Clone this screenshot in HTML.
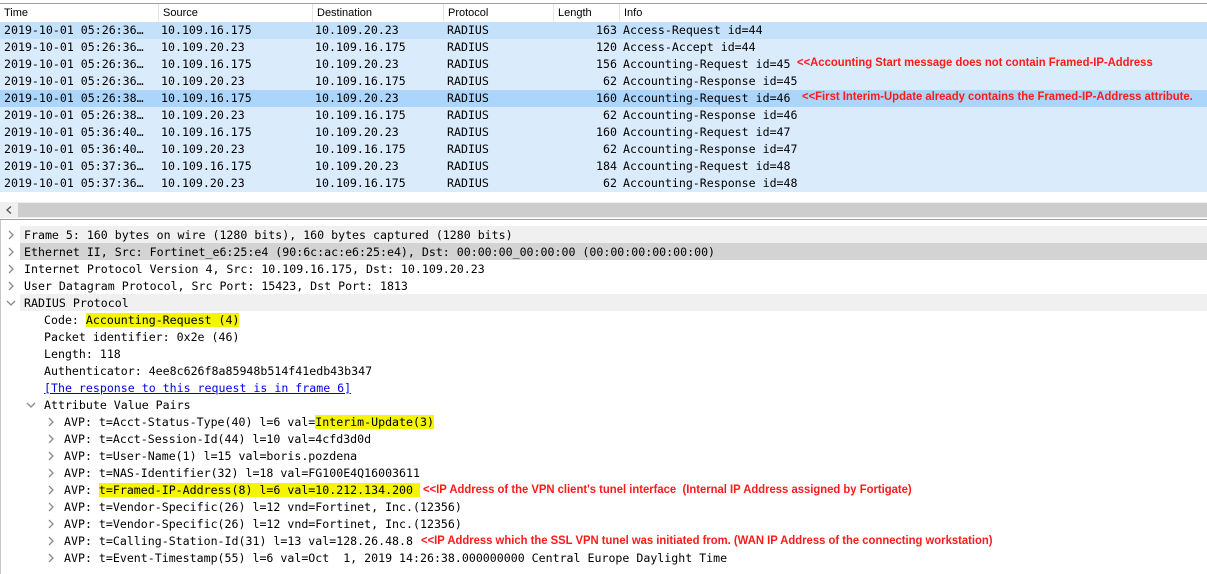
<!DOCTYPE html>
<html><head><meta charset="utf-8"><style>
body{margin:0;width:1207px;height:574px;overflow:hidden;background:#fff;position:relative;font-family:"DejaVu Sans Mono","Liberation Mono",monospace;font-size:11.6px;color:#000}
.a{position:absolute;white-space:pre;line-height:17px;height:17px}
.hdr{position:absolute;top:3px;left:0;width:1207px;height:19px;border-top:1px solid #a0a0a0;background:#fff;font-family:"Liberation Sans",sans-serif;font-size:11px}
.hdr span{position:absolute;top:0;line-height:19px;padding-left:4px;border-left:1px solid #e5e5e5;height:19px}
.row{position:absolute;left:0;width:1207px;height:17px;background:#daebfc}
.red{position:absolute;color:#ff1a1a;font-family:"Liberation Sans",sans-serif;font-size:11.5px;font-weight:bold;line-height:17px;white-space:pre;transform:scaleX(0.98);transform-origin:left}
.hl{background:#f5f500}
.c{position:absolute;width:10px;height:10px}
.d{margin-top:1px}
</style></head><body>
<div class="hdr">
<span style="left:0;border-left:none">Time</span>
<span style="left:158px">Source</span>
<span style="left:312px">Destination</span>
<span style="left:443px">Protocol</span>
<span style="left:553px">Length</span>
<span style="left:619px">Info</span>
</div>
<div class="row" style="top:22px;background:#c4e1fb"></div>
<div class="row" style="top:39px"></div>
<div class="row" style="top:56px"></div>
<div class="row" style="top:73px"></div>
<div class="row" style="top:90px;background:#acd5fb"></div>
<div class="row" style="top:107px"></div>
<div class="row" style="top:124px"></div>
<div class="row" style="top:141px"></div>
<div class="row" style="top:158px"></div>
<div class="row" style="top:175px"></div>
<div class="a" style="left:4px;top:22px">2019-10-01 05:26:36…
2019-10-01 05:26:36…
2019-10-01 05:26:36…
2019-10-01 05:26:36…
2019-10-01 05:26:38…
2019-10-01 05:26:38…
2019-10-01 05:36:40…
2019-10-01 05:36:40…
2019-10-01 05:37:36…
2019-10-01 05:37:36…</div>
<div class="a" style="left:161px;top:22px;height:auto">10.109.16.175
10.109.20.23
10.109.16.175
10.109.20.23
10.109.16.175
10.109.20.23
10.109.16.175
10.109.20.23
10.109.16.175
10.109.20.23</div>
<div class="a" style="left:315px;top:22px;height:auto">10.109.20.23
10.109.16.175
10.109.20.23
10.109.16.175
10.109.20.23
10.109.16.175
10.109.20.23
10.109.16.175
10.109.20.23
10.109.16.175</div>
<div class="a" style="left:447px;top:22px;height:auto">RADIUS
RADIUS
RADIUS
RADIUS
RADIUS
RADIUS
RADIUS
RADIUS
RADIUS
RADIUS</div>
<div class="a" style="top:22px;height:auto;text-align:right;width:20px;left:596px">163
120
156
 62
160
 62
160
 62
184
 62</div>
<div class="a" style="left:623px;top:22px;height:auto">Access-Request id=44
Access-Accept id=44
Accounting-Request id=45
Accounting-Response id=45
Accounting-Request id=46
Accounting-Response id=46
Accounting-Request id=47
Accounting-Response id=47
Accounting-Request id=48
Accounting-Response id=48</div>
<div class="red" style="left:797px;top:55px">&lt;&lt;Accounting Start message does not contain Framed-IP-Address</div>
<div class="red" style="left:802px;top:89px">&lt;&lt;First Interim-Update already contains the Framed-IP-Address attribute.</div>
<!-- scrollbar -->
<div style="position:absolute;left:0;top:202px;width:1207px;height:16px;background:#f0f0f0"></div>
<div style="position:absolute;left:18px;top:203px;width:1189px;height:14px;background:#cdcdcd"></div>
<svg class="c" style="left:4px;top:205px" viewBox="0 0 10 10"><polyline points="7,1.5 3,5 7,8.5" fill="none" stroke="#555" stroke-width="1.3"/></svg>
<div style="position:absolute;left:0;top:219px;width:1207px;height:1px;background:#a0a0a0"></div>
<div style="position:absolute;left:0;top:220px;width:1px;height:354px;background:#c8c8c8"></div>
<!-- details -->
<div style="position:absolute;left:20px;top:226px;width:1187px;height:17px;background:#f0f0f0"></div>
<div style="position:absolute;left:20px;top:243px;width:1187px;height:17px;background:#d3d3d3"></div>
<div style="position:absolute;left:20px;top:294px;width:1187px;height:17px;background:#f0f0f0"></div>
<svg width="0" height="0" style="position:absolute"><defs>
<symbol id="r" viewBox="0 0 10 10"><polyline points="3,1 7,5 3,9" fill="none" stroke="#8a8a8a" stroke-width="1.3"/></symbol>
<symbol id="dn" viewBox="0 0 10 10"><polyline points="1,3 5,7 9,3" fill="none" stroke="#8a8a8a" stroke-width="1.3"/></symbol>
</defs></svg>
<svg class="c" style="left:6px;top:230px"><use href="#r"/></svg>
<svg class="c" style="left:6px;top:247px"><use href="#r"/></svg>
<svg class="c" style="left:6px;top:264px"><use href="#r"/></svg>
<svg class="c" style="left:6px;top:281px"><use href="#r"/></svg>
<svg class="c" style="left:6px;top:298px"><use href="#dn"/></svg>
<svg class="c" style="left:26px;top:400px"><use href="#dn"/></svg>
<svg class="c" style="left:46px;top:417px"><use href="#r"/></svg>
<svg class="c" style="left:46px;top:434px"><use href="#r"/></svg>
<svg class="c" style="left:46px;top:451px"><use href="#r"/></svg>
<svg class="c" style="left:46px;top:468px"><use href="#r"/></svg>
<svg class="c" style="left:46px;top:485px"><use href="#r"/></svg>
<svg class="c" style="left:46px;top:502px"><use href="#r"/></svg>
<svg class="c" style="left:46px;top:519px"><use href="#r"/></svg>
<svg class="c" style="left:46px;top:536px"><use href="#r"/></svg>
<svg class="c" style="left:46px;top:553px"><use href="#r"/></svg>
<div class="a" style="left:24px;top:227px">Frame 5: 160 bytes on wire (1280 bits), 160 bytes captured (1280 bits)</div>
<div class="a" style="left:24px;top:244px">Ethernet II, Src: Fortinet_e6:25:e4 (90:6c:ac:e6:25:e4), Dst: 00:00:00_00:00:00 (00:00:00:00:00:00)</div>
<div class="a" style="left:24px;top:261px">Internet Protocol Version 4, Src: 10.109.16.175, Dst: 10.109.20.23</div>
<div class="a" style="left:24px;top:278px">User Datagram Protocol, Src Port: 15423, Dst Port: 1813</div>
<div class="a" style="left:24px;top:295px">RADIUS Protocol</div>
<div class="a" style="left:44px;top:312px">Code: <span class="hl">Accounting-Request (4)</span></div>
<div class="a" style="left:44px;top:329px">Packet identifier: 0x2e (46)</div>
<div class="a" style="left:44px;top:346px">Length: 118</div>
<div class="a" style="left:44px;top:363px">Authenticator: 4ee8c626f8a85948b514f41edb43b347</div>
<div class="a" style="left:44px;top:380px;color:#0000ee;text-decoration:underline">[The response to this request is in frame 6]</div>
<div class="a" style="left:44px;top:397px">Attribute Value Pairs</div>
<div class="a" style="left:64px;top:414px">AVP: t=Acct-Status-Type(40) l=6 val=<span class="hl">Interim-Update(3)</span></div>
<div class="a" style="left:64px;top:431px">AVP: t=Acct-Session-Id(44) l=10 val=4cfd3d0d</div>
<div class="a" style="left:64px;top:448px">AVP: t=User-Name(1) l=15 val=boris.pozdena</div>
<div class="a" style="left:64px;top:465px">AVP: t=NAS-Identifier(32) l=18 val=FG100E4Q16003611</div>
<div class="a" style="left:64px;top:482px">AVP: <span class="hl">t=Framed-IP-Address(8) l=6 val=10.212.134.200 </span></div>
<div class="a" style="left:64px;top:499px">AVP: t=Vendor-Specific(26) l=12 vnd=Fortinet, Inc.(12356)</div>
<div class="a" style="left:64px;top:516px">AVP: t=Vendor-Specific(26) l=12 vnd=Fortinet, Inc.(12356)</div>
<div class="a" style="left:64px;top:533px">AVP: t=Calling-Station-Id(31) l=13 val=128.26.48.8</div>
<div class="a" style="left:64px;top:550px">AVP: t=Event-Timestamp(55) l=6 val=Oct  1, 2019 14:26:38.000000000 Central Europe Daylight Time</div>
<div class="red" style="left:423px;top:482px">&lt;&lt;IP Address of the VPN client's tunel interface  (Internal IP Address assigned by Fortigate)</div>
<div class="red" style="left:421px;top:533px">&lt;&lt;IP Address which the SSL VPN tunel was initiated from. (WAN IP Address of the connecting workstation)</div>
</body></html>
